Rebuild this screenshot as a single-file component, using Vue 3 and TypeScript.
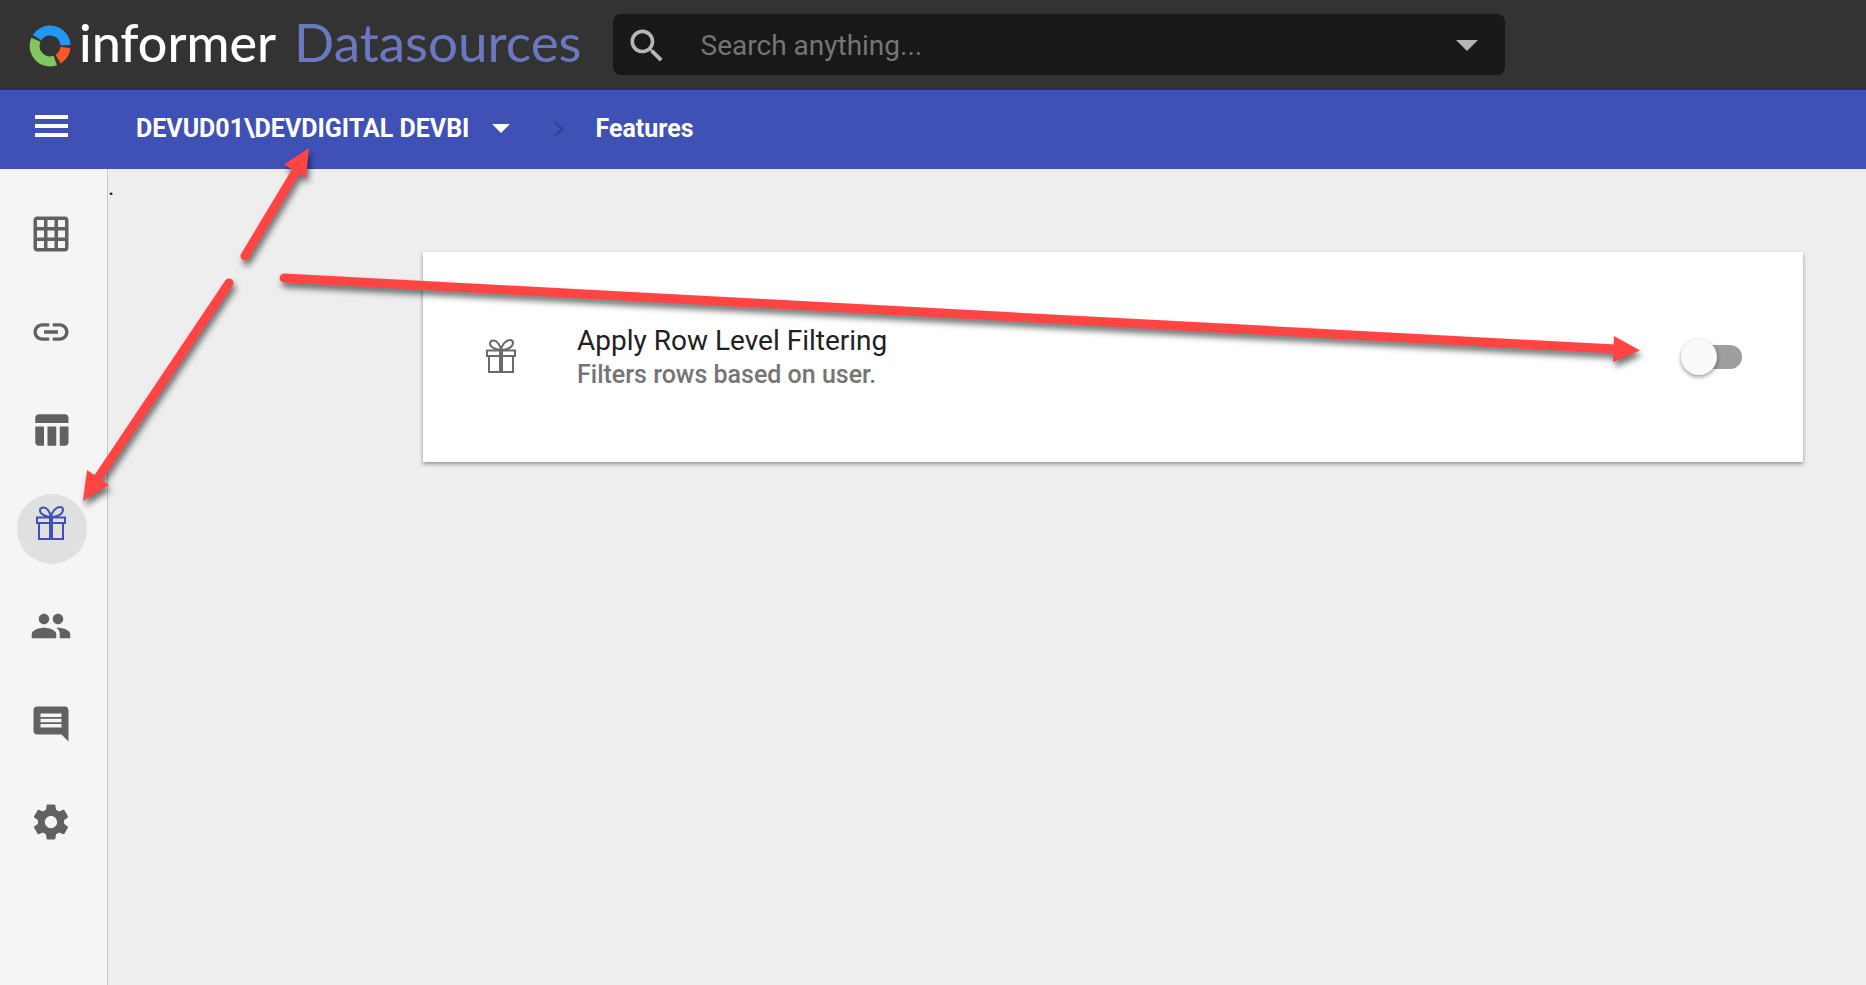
<script setup lang="ts">
import { ref } from 'vue'

interface NavItem {
  label: string
  path?: string
  active?: boolean
}

const query = ref('')
const rowFiltering = ref(false)

const navItems: NavItem[] = [
  {
    label: 'Datasets',
    path: 'M20 2H4c-1.1 0-2 .9-2 2v16c0 1.1.9 2 2 2h16c1.1 0 2-.9 2-2V4c0-1.1-.9-2-2-2zM8 20H4v-4h4v4zm0-6H4v-4h4v4zm0-6H4V4h4v4zm6 12h-4v-4h4v4zm0-6h-4v-4h4v4zm0-6h-4V4h4v4zm6 12h-4v-4h4v4zm0-6h-4v-4h4v4zm0-6h-4V4h4v4z',
  },
  {
    label: 'Links',
    path: 'M3.9 12c0-1.71 1.39-3.1 3.1-3.1h4V7H7c-2.76 0-5 2.24-5 5s2.24 5 5 5h4v-1.9H7c-1.71 0-3.1-1.39-3.1-3.1zM8 13h8v-2H8v2zm9-6h-4v1.9h4c1.71 0 3.1 1.39 3.1 3.1s-1.39 3.1-3.1 3.1h-4V17h4c2.76 0 5-2.24 5-5s-2.24-5-5-5z',
  },
  {
    label: 'Tables',
    path: 'M10 10h5v11h-5zM17 21h3c1.1 0 2-.9 2-2v-9h-5v11zM20 3H5c-1.1 0-2 .9-2 2v3h19V5c0-1.1-.9-2-2-2zM3 19c0 1.1.9 2 2 2h3V10H3v9z',
  },
  { label: 'Features', active: true },
  {
    label: 'Sharing',
    path: 'M16 11c1.66 0 2.99-1.34 2.99-3S17.66 5 16 5s-3 1.34-3 3 1.34 3 3 3zm-8 0c1.66 0 2.99-1.34 2.99-3S9.66 5 8 5 5 6.34 5 8s1.34 3 3 3zm0 2c-2.33 0-7 1.17-7 3.5V19h14v-2.5c0-2.33-4.67-3.5-7-3.5zm8 0c-.29 0-.62.02-.97.05 1.16.84 1.97 1.97 1.97 3.45V19h6v-2.5c0-2.33-4.67-3.5-7-3.5z',
  },
  {
    label: 'Comments',
    path: 'M22 4c0-1.1-.9-2-2-2H4c-1.1 0-2 .9-2 2v12c0 1.1.9 2 2 2h14l4 4V4zm-4 10H6v-2h12v2zm0-3H6V9h12v2zm0-3H6V6h12v2z',
  },
  {
    label: 'Settings',
    path: 'M19.43 12.98c.04-.32.07-.64.07-.98s-.03-.66-.07-.98l2.11-1.65c.19-.15.24-.42.12-.64l-2-3.46c-.12-.22-.39-.3-.61-.22l-2.49 1c-.52-.4-1.08-.73-1.69-.98l-.38-2.65C14.46 2.18 14.25 2 14 2h-4c-.25 0-.46.18-.49.42l-.38 2.65c-.61.25-1.17.59-1.69.98l-2.49-1c-.23-.09-.49 0-.61.22l-2 3.46c-.13.22-.07.49.12.64l2.11 1.65c-.04.32-.07.65-.07.98s.03.66.07.98l-2.11 1.65c-.19.15-.24.42-.12.64l2 3.46c.12.22.39.3.61.22l2.49-1c.52.4 1.08.73 1.69.98l.38 2.65c.03.24.24.42.49.42h4c.25 0 .46-.18.49-.42l.38-2.65c.61-.25 1.17-.59 1.69-.98l2.49 1c.23.09.49 0 .61-.22l2-3.46c.12-.22.07-.49-.12-.64l-2.11-1.65zM12 15.5c-1.93 0-3.5-1.57-3.5-3.5s1.57-3.5 3.5-3.5 3.5 1.57 3.5 3.5-1.57 3.5-3.5 3.5z',
  },
]
</script>

<template>
  <div class="app">
    <header class="topbar">
      <a class="brand" href="#" aria-label="informer">
        <svg class="brand-mark" viewBox="0 0 42 42" aria-hidden="true">
          <g fill="none" stroke-width="10">
            <path d="M7.98 12.66A15.5 15.5 0 0 1 36.49 20.2" stroke="#2196f3" />
            <path d="M36.4 22.6A15.5 15.5 0 0 1 29.2 34.14" stroke="#ff5722" />
            <path d="M26.3 35.56A15.5 15.5 0 0 1 6.95 14.7" stroke="#82c662" />
          </g>
        </svg>
        <span class="brand-name">informer</span>
      </a>
      <h1 class="section">Datasources</h1>
      <div class="search">
        <svg class="search-icon" viewBox="0 0 24 24" aria-hidden="true">
          <path d="M15.5 14h-.79l-.28-.27C15.41 12.59 16 11.11 16 9.5 16 5.91 13.09 3 9.5 3S3 5.91 3 9.5 5.91 16 9.5 16c1.61 0 3.09-.59 4.23-1.57l.27.28v.79l5 4.99L20.49 19l-4.99-5zm-6 0C7.01 14 5 11.99 5 9.5S7.01 5 9.5 5 14 7.01 14 9.5 11.99 14 9.5 14z" />
        </svg>
        <input v-model="query" type="text" placeholder="Search anything..." aria-label="Search anything" />
        <button class="search-more" type="button" aria-label="Search options">
          <svg viewBox="0 0 22 11" aria-hidden="true"><path d="M0 0h22L11 11z" /></svg>
        </button>
      </div>
    </header>

    <nav class="crumbs" aria-label="Breadcrumb">
      <button class="menu" type="button" aria-label="Menu">
        <svg viewBox="0 0 33 22" aria-hidden="true"><path d="M0 0h33v4H0zM0 9h33v4H0zM0 18h33v4H0z" /></svg>
      </button>
      <button class="crumb" type="button">
        <span>DEVUD01\DEVDIGITAL DEVBI</span>
        <svg class="caret" viewBox="0 0 18 9" aria-hidden="true"><path d="M0 0h18L9 9z" /></svg>
      </button>
      <svg class="chevron" viewBox="0 0 10 16" aria-hidden="true"><path d="M1 1l7 7-7 7" /></svg>
      <a class="crumb current" href="#" aria-current="page">Features</a>
    </nav>

    <div class="body">
      <nav class="rail" aria-label="Datasource">
        <button
          v-for="item in navItems"
          :key="item.label"
          type="button"
          class="rail-item"
          :class="{ active: item.active }"
          :aria-label="item.label"
        >
          <svg v-if="item.path" class="glyph" viewBox="0 0 24 24" aria-hidden="true"><path :d="item.path" /></svg>
          <svg v-else class="gift" viewBox="0 0 30 34" aria-hidden="true">
            <path d="M1 11.5h28v5.5H1zM3 17v16h24V17M15 11C9 10.5 4 8 4 4.5 4 2.5 5.5 1.5 7.5 1.5 11 1.5 14 6 15 11M15 11C16 5.5 20 1 24 1c2 0 3 1 3 3 0 3.5-5 7-12 7" />
            <path class="ribbon" d="M15 11v22" />
          </svg>
        </button>
      </nav>

      <main class="content">
        <span class="dot">.</span>
        <section class="card">
          <svg class="gift" viewBox="0 0 30 34" aria-hidden="true">
            <path d="M1 11.5h28v5.5H1zM3 17v16h24V17M15 11C9 10.5 4 8 4 4.5 4 2.5 5.5 1.5 7.5 1.5 11 1.5 14 6 15 11M15 11C16 5.5 20 1 24 1c2 0 3 1 3 3 0 3.5-5 7-12 7" />
            <path class="ribbon" d="M15 11v22" />
          </svg>
          <label class="card-text" for="row-filtering">
            <span class="card-title">Apply Row Level Filtering</span>
            <span class="card-note">Filters rows based on user.</span>
          </label>
          <input id="row-filtering" v-model="rowFiltering" class="switch" type="checkbox" role="switch" />
        </section>
      </main>
    </div>

    <svg class="arrows" aria-hidden="true">
      <g class="arrow">
        <path class="shaft" d="M245 256L298 168" />
        <path d="M309 148L284 164.5L306 178z" />
      </g>
      <g class="arrow">
        <path class="shaft" d="M229 283L96 481" />
        <path d="M83 501L87 470L109 485z" />
      </g>
      <g class="arrow">
        <path class="shaft" d="M284 278L1615 349" />
        <path d="M1640 350.5L1614 336L1613 362z" />
      </g>
    </svg>
  </div>
</template>

<style>
body {
  background: #eee;
}
</style>

<style scoped>
.app {
  position: relative;
  display: flex;
  flex-direction: column;
  min-height: 100vh;
  overflow: hidden;
  font-family: Roboto, sans-serif;
  color: #212121;
}

button {
  padding: 0;
  border: 0;
  background: none;
  color: inherit;
  font: inherit;
  cursor: pointer;
}

a {
  color: inherit;
  text-decoration: none;
}

svg {
  display: block;
  flex: none;
}

.topbar {
  display: flex;
  align-items: flex-start;
  box-sizing: border-box;
  height: 90px;
  padding: 14px 0 0 29px;
  background: #333;
}

.brand {
  display: flex;
  align-items: center;
  gap: 8px;
  color: #fff;
}

.brand-mark {
  width: 42px;
  height: 42px;
  margin-top: 8px;
}

.brand-name,
.section {
  font-family: Lato, sans-serif;
  font-size: 53px;
  font-weight: 400;
  line-height: 56px;
}

.brand-name {
  font-size: 52px;
  font-weight: 500;
}

.section {
  margin: 0 0 0 18px;
  color: #6b78c0;
}

.search {
  display: flex;
  align-items: center;
  flex: 0 1 892px;
  box-sizing: border-box;
  height: 61px;
  margin-left: 31px;
  padding: 2px 27px 0 12px;
  border-radius: 8px;
  background: #181818;
}

.search-icon {
  width: 44px;
  height: 44px;
  fill: #b8b5b5;
}

.search input {
  flex: 1;
  min-width: 0;
  margin-left: 32px;
  padding: 0;
  border: 0;
  outline: 0;
  background: none;
  color: #ddd;
  font-family: inherit;
  font-size: 28px;
}

.search input::placeholder {
  color: #757575;
  opacity: 1;
}

.search-more svg {
  width: 22px;
  height: 11px;
  fill: #b8b5b5;
}

.crumbs {
  display: flex;
  align-items: center;
  box-sizing: border-box;
  height: 79px;
  padding: 0 0 2px 35px;
  background: #3f51b5;
  color: #fff;
  font-size: 25px;
  font-weight: 700;
  line-height: 32px;
}

.menu {
  margin-bottom: 6px;
}

.menu svg {
  width: 33px;
  height: 22px;
  fill: #fff;
}

.crumb {
  display: flex;
  align-items: center;
  gap: 23px;
  margin-left: 68px;
}

.caret {
  width: 18px;
  height: 9px;
  fill: #fff;
}

.chevron {
  width: 10px;
  height: 16px;
  margin-left: 44px;
  fill: none;
  stroke: #303f94;
  stroke-width: 2;
}

.crumb.current {
  margin-left: 31px;
}

.body {
  display: flex;
  flex: 1;
}

.rail {
  display: flex;
  flex-direction: column;
  gap: 28px;
  box-sizing: border-box;
  width: 108px;
  padding: 31px 0 0 17px;
  border-right: 1px solid #c8c8c8;
  background: #f5f5f5;
}

.rail-item {
  display: grid;
  place-items: center;
  width: 70px;
  height: 70px;
  padding: 0 2px 2px 0;
  border-radius: 50%;
}

.rail-item.active {
  background: #e0e0e0;
}

.glyph {
  width: 42px;
  height: 42px;
  fill: #616161;
}

.gift {
  width: 30px;
  height: 34px;
  fill: none;
  stroke: #6b6b6b;
  stroke-width: 2;
}

.gift .ribbon {
  stroke-width: 4;
}

.rail-item .gift {
  margin-bottom: 10px;
  stroke: #3f51b5;
}

.content {
  flex: 1;
  background: #eee;
}

.dot {
  display: block;
  box-sizing: border-box;
  height: 83px;
  font-size: 24px;
  line-height: 36px;
}

.card {
  display: flex;
  align-items: center;
  box-sizing: border-box;
  height: 210px;
  margin: 0 63px 0 315px;
  padding: 0 61px 0 63px;
  background: #fff;
  box-shadow: 0 2px 4px rgba(0, 0, 0, 0.4);
}

.card > .gift {
  margin-bottom: 2px;
}

.card-text {
  display: flex;
  flex: 1;
  flex-direction: column;
  margin-left: 61px;
}

.card-title {
  font-size: 28px;
  line-height: 36px;
}

.card-note {
  color: #757575;
  font-size: 25px;
  font-weight: 500;
  line-height: 32px;
}

.switch {
  position: relative;
  width: 61px;
  height: 36px;
  margin: 0;
  appearance: none;
  cursor: pointer;
}

.switch::before {
  position: absolute;
  inset: 6px 0 6px 2px;
  border-radius: 12px;
  background: #9e9e9e;
  content: '';
}

.switch::after {
  position: absolute;
  top: 0;
  left: 0;
  width: 36px;
  height: 36px;
  border-radius: 50%;
  background: #fafafa;
  box-shadow: 0 2px 4px rgba(0, 0, 0, 0.4);
  content: '';
}

.switch:checked::after {
  left: 25px;
}

.arrows {
  position: absolute;
  top: 0;
  left: 0;
  width: 100%;
  height: 100%;
  pointer-events: none;
}

.arrow {
  fill: #ff4444;
  filter: drop-shadow(2px 5px 3px rgba(0, 0, 0, 0.55));
}

.shaft {
  fill: none;
  stroke: #ff4444;
  stroke-width: 9;
  stroke-linecap: round;
}
</style>
